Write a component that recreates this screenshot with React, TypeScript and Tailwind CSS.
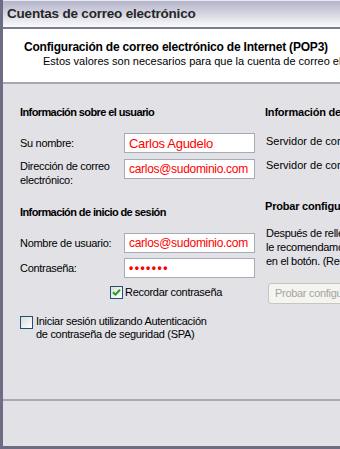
import React from "react";

const font = { fontFamily: '"Liberation Sans", Arial, sans-serif' };

function Check({ checked }: { checked?: boolean }) {
  return (
    <div className="w-[13px] h-[13px] border border-[#1c5180] bg-gradient-to-br from-[#dcdcd7] to-white flex items-center justify-center shrink-0">
      {checked && (
        <svg width="9" height="9" viewBox="0 0 9 9">
          <path d="M1 4.2 L3.4 6.6 L8 1.8" stroke="#21a121" strokeWidth="2" fill="none" />
        </svg>
      )}
    </div>
  );
}

function Field({ value, kind }: { value: string; kind: "name" | "email" | "password" }) {
  return (
    <div className="w-[131px] h-[20px] bg-white border border-[#a5acb5] flex items-center pl-[4px] overflow-hidden whitespace-nowrap">
      {kind === "password" && (
        <span className="text-[#ff0000] text-[12px] tracking-[1.5px] leading-none font-bold" style={font}>
          {value}
        </span>
      )}
      {kind === "name" && (
        <span className="text-[#ff0000] text-[13px] leading-none" style={font}>
          {value}
        </span>
      )}
      {kind === "email" && (
        <span className="text-[#ff0000] text-[12px] leading-none tracking-[-0.3px]" style={font}>
          {value}
        </span>
      )}
    </div>
  );
}

export default function App() {
  return (
    <div
      className="w-[340px] h-[449px] overflow-hidden flex flex-col bg-[#e1e1e6] border-l-[3px] border-b-[3px] border-[#6c6c84] text-[11px] text-black tracking-[-0.3px]"
      style={font}
    >
      <div className="h-[29px] shrink-0 bg-gradient-to-b from-[#b4b4c9] via-[#d6d6e3] to-[#fbfbfd] border-t border-[#e8e8f0] border-b-[2px] border-b-[#7a7a92] flex items-center pl-[4px]">
        <span className="text-[13.5px] font-bold text-[#262626] tracking-[-0.2px]">Cuentas de correo electrónico</span>
      </div>
      <div className="h-[55px] shrink-0 bg-white border-b-[2px] border-[#a8a8b4] pt-[11px]">
        <div className="pl-[21px] text-[12px] font-bold leading-[14px] whitespace-nowrap tracking-[-0.2px]">
          Configuración de correo electrónico de Internet (POP3)
        </div>
        <div className="pl-[40px] leading-[14px] whitespace-nowrap tracking-normal">
          Estos valores son necesarios para que la cuenta de correo electrónico funcione.
        </div>
      </div>
      <div className="flex-1 flex flex-col">
        <div className="flex pt-[21px] pl-[17px] overflow-hidden whitespace-nowrap">
          <div className="w-[235px] shrink-0 flex flex-col">
            <div className="font-bold leading-[14px] tracking-[-0.6px]">Información sobre el usuario</div>
            <div className="flex items-center mt-[14px]">
              <div className="w-[104px] leading-[14px]">Su nombre:</div>
              <Field value="Carlos Agudelo" kind="name" />
            </div>
            <div className="flex items-start mt-[6px]">
              <div className="w-[104px] leading-[14px] whitespace-normal">
                Dirección de correo
                <br />
                electrónico:
              </div>
              <Field value="carlos@sudominio.com" kind="email" />
            </div>
            <div className="font-bold leading-[14px] mt-[18px] tracking-[-0.6px]">Información de inicio de sesión</div>
            <div className="flex items-center mt-[14px]">
              <div className="w-[104px] leading-[14px]">Nombre de usuario:</div>
              <Field value="carlos@sudominio.com" kind="email" />
            </div>
            <div className="flex items-center mt-[5px]">
              <div className="w-[104px] leading-[14px]">Contraseña:</div>
              <Field value="•••••••" kind="password" />
            </div>
            <div className="flex items-center mt-[7px] pl-[90px] gap-[2px]">
              <Check checked />
              <span className="leading-[14px]">Recordar contraseña</span>
            </div>
            <div className="flex items-start mt-[17px] gap-[3px]">
              <Check />
              <span className="leading-[13px] -mt-[1px]">
                Iniciar sesión utilizando Autenticación
                <br />
                de contraseña de seguridad (SPA)
              </span>
            </div>
          </div>
          <div className="ml-[10px] flex flex-col shrink-0">
            <div className="font-bold leading-[14px] tracking-[-0.2px]">Información de servidor</div>
            <div className="leading-[14px] mt-[15px] ml-[1px] tracking-normal">Servidor de correo entrante (POP3):</div>
            <div className="leading-[14px] mt-[10px] ml-[1px] tracking-normal">Servidor de correo saliente (SMTP):</div>
            <div className="font-bold leading-[14px] mt-[27px] tracking-[-0.2px]">Probar configuración de la cuenta</div>
            <div className="leading-[14px] mt-[13px] ml-[1px]">
              Después de rellenar la información de esta pantalla,
              <br />
              le recomendamos que pruebe su cuenta haciendo clic
              <br />
              en el botón. (Requiere conexión de red)
            </div>
            <div className="mt-[15px] ml-[3px] h-[21px] w-[140px] border border-[#c9c7ba] rounded-[3px] bg-[#f4f4f0] flex items-center pl-[6px] text-[#a5a59b]">
              Probar configuración de la cuenta...
            </div>
          </div>
        </div>
      </div>
      <div className="h-[47px] shrink-0 border-t-[2px] border-[#a8a8b4] bg-[#e1e1e6]" />
    </div>
  );
}
